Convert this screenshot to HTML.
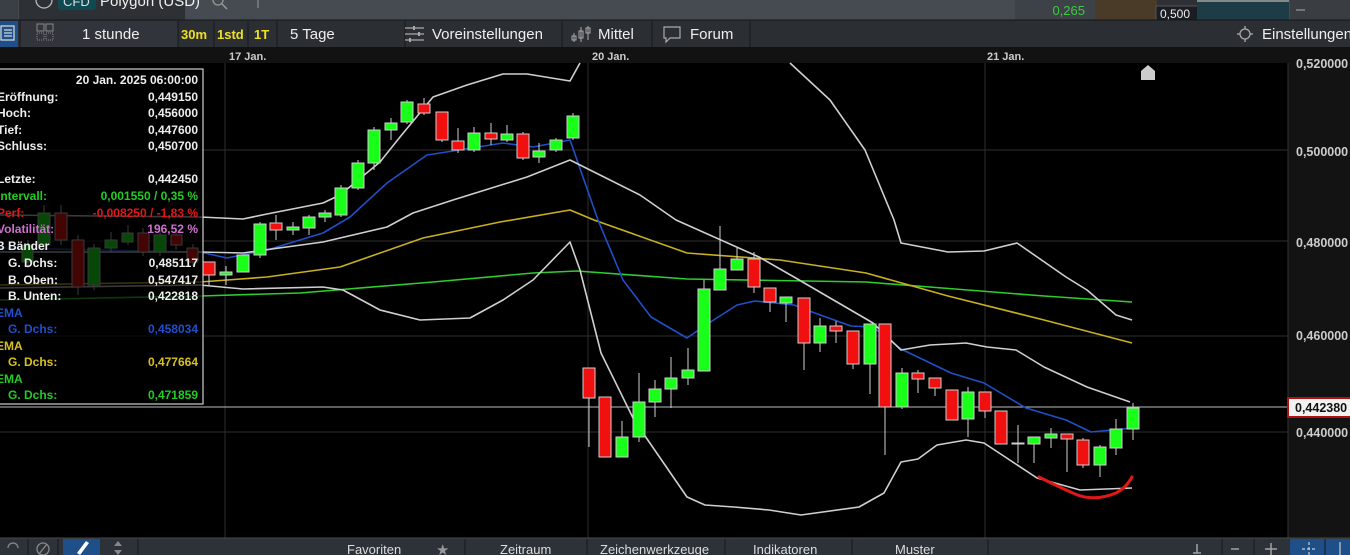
<!DOCTYPE html>
<html><head><meta charset="utf-8"><style>
body{margin:0;width:1350px;height:555px;overflow:hidden;background:#000;font-family:"Liberation Sans",sans-serif}
svg{display:block}
</style></head><body>
<svg width="1350" height="555" xmlns="http://www.w3.org/2000/svg" font-family="Liberation Sans, sans-serif">
<rect x="0" y="0" width="1350" height="20" fill="#464a51"/>
<rect x="0" y="0" width="18" height="20" fill="#3a3e45"/>
<rect x="19" y="0" width="166" height="20" fill="#2d3136"/>
<circle cx="44" cy="0" r="8" fill="none" stroke="#bbb" stroke-width="1.3"/>
<rect x="58" y="-4" width="38" height="14" rx="3" fill="#0f4a52"/>
<text x="63" y="6" font-size="13" fill="#ddd">CFD</text>
<text x="100" y="6" font-size="15" fill="#eee">Polygon (USD)</text>
<circle cx="218" cy="0" r="5" fill="none" stroke="#999" stroke-width="1.3"/>
<line x1="222" y1="4" x2="227" y2="9" stroke="#999" stroke-width="1.5"/>
<line x1="258" y1="0" x2="258" y2="8" stroke="#999"/>
<rect x="1015" y="0" width="80" height="20" fill="#3d4148"/>
<text x="1085" y="15" font-size="13" fill="#3dcc3d" text-anchor="end">0,265</text>
<rect x="1095" y="0" width="62" height="20" fill="#4a3b28"/>
<rect x="1157" y="0" width="40" height="20" fill="#2d3035"/>
<rect x="1156" y="6" width="42" height="14" fill="#1a1d22" stroke="#555"/>
<text x="1160" y="18" font-size="12" fill="#eee">0,500</text>
<rect x="1197" y="0" width="92" height="20" fill="#1d3c46"/>
<rect x="1197" y="0" width="92" height="2" fill="#888"/>
<rect x="1290" y="0" width="60" height="20" fill="#3a3d42"/>
<line x1="1296" y1="10" x2="1305" y2="10" stroke="#aaa"/>
<rect x="0" y="20" width="1350" height="27" fill="#2b2f34"/>
<line x1="0" y1="20" x2="1350" y2="20" stroke="#151719"/>
<rect x="0" y="21" width="18" height="26" fill="#1f4f88"/>
<g stroke="#ddd" stroke-width="1.2" fill="none"><rect x="1" y="26" width="13" height="14"/><line x1="4" y1="30" x2="12" y2="30"/><line x1="4" y1="33" x2="12" y2="33"/><line x1="4" y1="36" x2="12" y2="36"/></g>
<rect x="20" y="21" width="158" height="26" fill="#31353b"/>
<g stroke="#888" fill="none"><rect x="37" y="24" width="7" height="7"/><rect x="46" y="24" width="7" height="7"/><rect x="37" y="33" width="7" height="7" stroke-dasharray="1 1"/><rect x="46" y="33" width="7" height="7" stroke-dasharray="1 1"/></g>
<text x="82" y="39" font-size="15" fill="#eee">1 stunde</text>
<g stroke="#161819"><line x1="178" y1="21" x2="178" y2="47"/><line x1="214" y1="21" x2="214" y2="47"/><line x1="248" y1="21" x2="248" y2="47"/><line x1="277" y1="21" x2="277" y2="47"/><line x1="405" y1="21" x2="405" y2="47"/><line x1="562" y1="21" x2="562" y2="47"/><line x1="652" y1="21" x2="652" y2="47"/><line x1="750" y1="21" x2="750" y2="47"/><line x1="20" y1="21" x2="20" y2="47"/></g>
<text x="181" y="39" font-size="13" fill="#f0e020" font-weight="bold">30m</text>
<text x="217" y="39" font-size="13" fill="#f0e020" font-weight="bold">1std</text>
<text x="254" y="39" font-size="13" fill="#f0e020" font-weight="bold">1T</text>
<text x="290" y="39" font-size="15" fill="#eee">5 Tage</text>
<g stroke="#aaa" stroke-width="1.3"><line x1="405" y1="28" x2="424" y2="28"/><line x1="405" y1="34" x2="424" y2="34"/><line x1="405" y1="40" x2="424" y2="40"/><line x1="414" y1="26" x2="414" y2="30" stroke-width="2"/><line x1="419" y1="32" x2="419" y2="36" stroke-width="2"/><line x1="410" y1="38" x2="410" y2="42" stroke-width="2"/></g>
<text x="432" y="39" font-size="15" fill="#eee">Voreinstellungen</text>
<g stroke="#aaa" fill="none"><line x1="574" y1="33" x2="574" y2="42"/><rect x="572" y="36" width="4" height="4"/><line x1="581" y1="27" x2="581" y2="42"/><rect x="579" y="31" width="4" height="7"/><line x1="588" y1="26" x2="588" y2="40"/><rect x="586" y="28" width="4" height="5"/></g>
<text x="598" y="39" font-size="15" fill="#eee">Mittel</text>
<path d="M664 27h16v11h-10l-4 4v-4h-2z" fill="none" stroke="#aaa" stroke-width="1.2"/>
<text x="690" y="39" font-size="15" fill="#eee">Forum</text>
<g stroke="#aaa" fill="none" stroke-width="1.3"><circle cx="1245" cy="34" r="5"/><line x1="1245" y1="26" x2="1245" y2="29"/><line x1="1245" y1="39" x2="1245" y2="42"/><line x1="1237" y1="34" x2="1240" y2="34"/><line x1="1250" y1="34" x2="1253" y2="34"/></g>
<text x="1262" y="39" font-size="15" fill="#eee">Einstellungen</text>
<rect x="0" y="47" width="1350" height="16" fill="#121212"/>
<g font-size="11" font-weight="bold" fill="#ccc"><text x="229" y="60">17 Jan.</text><text x="592" y="60">20 Jan.</text><text x="987" y="60">21 Jan.</text></g>
<rect x="1288" y="63" width="62" height="475" fill="#131313"/>
<line x1="1288" y1="63" x2="1288" y2="538" stroke="#333"/>
<g font-size="12.5" font-weight="bold" fill="#ccc"><text x="1296" y="68">0,520000</text><text x="1296" y="156">0,500000</text><text x="1296" y="247">0,480000</text><text x="1296" y="340">0,460000</text><text x="1296" y="437">0,440000</text></g>
<g stroke="#2e2e2e"><line x1="0" y1="150" x2="1288" y2="150"/><line x1="0" y1="241" x2="1288" y2="241"/><line x1="0" y1="336" x2="1288" y2="336"/><line x1="0" y1="432" x2="1288" y2="432"/><line x1="225" y1="63" x2="225" y2="538"/><line x1="588" y1="63" x2="588" y2="538"/><line x1="985" y1="63" x2="985" y2="538"/></g>
<line x1="0" y1="407" x2="1288" y2="407" stroke="#bbb"/>
<rect x="1288" y="398" width="64" height="19" fill="#f2f2f2" stroke="#b01010" stroke-width="2"/>
<text x="1295" y="412" font-size="12.5" font-weight="bold" fill="#111">0,442380</text>
<path d="M1141 80v-9l7-6 7 6v9z" fill="#ccc"/>
<g fill="none" stroke-width="1.6" stroke-linejoin="round">
<polyline stroke="#2ecc2e" points="0,300 200,296 300,293 433,282 533,273 577,271 687,279 866,282 955,289 1044,296 1132,302"/>
<polyline stroke="#c8b020" points="0,285 200,282 267,277 340,267 423,238 500,222 570,210 594,220 687,253 780,260 866,273 948,296 1044,320 1132,343"/>
<polyline stroke="#1e50c8" points="0,248 200,252 227,258 267,250 323,233 350,217 387,183 427,155 453,151 503,143 533,147 570,140 598,220 623,280 651,317 687,338 709,323 737,305 755,301 794,305 812,312 851,326 873,327 901,349 951,373 984,383 1026,408 1066,420 1091,432 1132,428"/>
<g stroke="#cfcfcf">
<polyline points="0,215 200,217 243,219 267,214 323,203 340,195 380,162 400,137 433,97 467,85 503,74 527,74 570,81 580,63"/>
<polyline points="790,63 830,100 865,150 894,220 901,243 948,252 984,251 1017,243 1066,277 1087,290 1116,315 1132,320"/>
<polyline points="0,252 200,252 243,253 323,242 387,227 413,213 453,200 527,177 570,160 600,175 640,195 676,220 759,257 794,277 873,323 901,350 930,345 966,343 987,347 1016,350 1044,367 1087,387 1130,402"/>
<polyline points="0,288 200,285 243,289 323,287 343,290 380,310 420,320 470,318 503,300 533,280 570,242 580,270 601,353 634,420 687,497 705,505 734,507 769,510 801,515 859,507 884,493 901,462 918,459 937,445 966,440 984,443 1037,478 1080,490 1132,488"/>
</g>
</g>
<g stroke="#cfcfcf" stroke-width="1">
<line x1="28" y1="240" x2="28" y2="268"/><rect x="22" y="245" width="11" height="17" fill="#1aff1a"/>
<line x1="44" y1="205" x2="44" y2="250"/><rect x="38" y="213" width="12" height="32" fill="#1aff1a"/>
<line x1="61" y1="205" x2="61" y2="245"/><rect x="55" y="213" width="12" height="27" fill="#f01010"/>
<line x1="78" y1="235" x2="78" y2="295"/><rect x="72" y="240" width="12" height="47" fill="#f01010"/>
<line x1="94" y1="244" x2="94" y2="290"/><rect x="88" y="248" width="12" height="37" fill="#1aff1a"/>
<line x1="111" y1="232" x2="111" y2="252"/><rect x="105" y="240" width="12" height="8" fill="#1aff1a"/>
<line x1="128" y1="225" x2="128" y2="245"/><rect x="122" y="233" width="11" height="9" fill="#1aff1a"/>
<line x1="143" y1="228" x2="143" y2="256"/><rect x="138" y="233" width="11" height="19" fill="#f01010"/>
<line x1="160" y1="230" x2="160" y2="256"/><rect x="154" y="235" width="12" height="17" fill="#1aff1a"/>
<line x1="176" y1="230" x2="176" y2="250"/><rect x="171" y="235" width="11" height="10" fill="#f01010"/>
<line x1="193" y1="244" x2="193" y2="266"/><rect x="187" y="248" width="11" height="14" fill="#f01010"/>
<line x1="209" y1="262" x2="209" y2="285"/><rect x="203" y="262" width="12" height="13" fill="#f01010"/>
<line x1="226" y1="266" x2="226" y2="285"/><rect x="220" y="272" width="12" height="3" fill="#1aff1a"/>
<line x1="243" y1="255" x2="243" y2="272"/><rect x="237" y="255" width="12" height="17" fill="#1aff1a"/>
<line x1="260" y1="222" x2="260" y2="258"/><rect x="254" y="224" width="12" height="31" fill="#1aff1a"/>
<line x1="276" y1="215" x2="276" y2="240"/><rect x="270" y="223" width="12" height="7" fill="#f01010"/>
<line x1="293" y1="222" x2="293" y2="235"/><rect x="287" y="227" width="12" height="3" fill="#1aff1a"/>
<line x1="309" y1="215" x2="309" y2="235"/><rect x="303" y="217" width="12" height="11" fill="#1aff1a"/>
<line x1="325" y1="210" x2="325" y2="222"/><rect x="319" y="213" width="12" height="4" fill="#1aff1a"/>
<line x1="341" y1="185" x2="341" y2="217"/><rect x="335" y="188" width="12" height="27" fill="#1aff1a"/>
<line x1="358" y1="160" x2="358" y2="190"/><rect x="352" y="163" width="12" height="25" fill="#1aff1a"/>
<line x1="374" y1="127" x2="374" y2="170"/><rect x="368" y="130" width="12" height="33" fill="#1aff1a"/>
<line x1="391" y1="118" x2="391" y2="140"/><rect x="385" y="123" width="12" height="7" fill="#1aff1a"/>
<line x1="407" y1="100" x2="407" y2="124"/><rect x="401" y="102" width="12" height="20" fill="#1aff1a"/>
<line x1="424" y1="98" x2="424" y2="115"/><rect x="418" y="104" width="12" height="9" fill="#f01010"/>
<line x1="442" y1="112" x2="442" y2="142"/><rect x="436" y="112" width="12" height="28" fill="#f01010"/>
<line x1="458" y1="128" x2="458" y2="153"/><rect x="452" y="141" width="12" height="9" fill="#f01010"/>
<line x1="474" y1="127" x2="474" y2="152"/><rect x="468" y="133" width="12" height="17" fill="#1aff1a"/>
<line x1="491" y1="123" x2="491" y2="145"/><rect x="485" y="133" width="12" height="6" fill="#f01010"/>
<line x1="507" y1="125" x2="507" y2="142"/><rect x="501" y="134" width="12" height="6" fill="#1aff1a"/>
<line x1="523" y1="132" x2="523" y2="160"/><rect x="517" y="134" width="12" height="24" fill="#f01010"/>
<line x1="539" y1="143" x2="539" y2="163"/><rect x="533" y="151" width="12" height="6" fill="#1aff1a"/>
<line x1="556" y1="138" x2="556" y2="152"/><rect x="550" y="140" width="12" height="10" fill="#1aff1a"/>
<line x1="573" y1="113" x2="573" y2="140"/><rect x="567" y="116" width="12" height="22" fill="#1aff1a"/>
<line x1="589" y1="368" x2="589" y2="447"/><rect x="583" y="368" width="12" height="30" fill="#f01010"/>
<rect x="599" y="397" width="12" height="60" fill="#f01010"/>
<line x1="622" y1="421" x2="622" y2="457"/><rect x="616" y="437" width="12" height="20" fill="#1aff1a"/>
<line x1="639" y1="373" x2="639" y2="442"/><rect x="633" y="402" width="12" height="35" fill="#1aff1a"/>
<line x1="655" y1="380" x2="655" y2="417"/><rect x="649" y="389" width="12" height="13" fill="#1aff1a"/>
<line x1="671" y1="357" x2="671" y2="408"/><rect x="665" y="378" width="12" height="11" fill="#1aff1a"/>
<line x1="688" y1="348" x2="688" y2="385"/><rect x="682" y="370" width="12" height="8" fill="#1aff1a"/>
<line x1="704" y1="280" x2="704" y2="371"/><rect x="698" y="289" width="12" height="82" fill="#1aff1a"/>
<line x1="720" y1="226" x2="720" y2="290"/><rect x="714" y="269" width="12" height="21" fill="#1aff1a"/>
<line x1="737" y1="248" x2="737" y2="270"/><rect x="731" y="259" width="12" height="11" fill="#1aff1a"/>
<line x1="754" y1="252" x2="754" y2="293"/><rect x="748" y="259" width="12" height="28" fill="#f01010"/>
<line x1="770" y1="288" x2="770" y2="312"/><rect x="764" y="288" width="12" height="14" fill="#f01010"/>
<line x1="786" y1="297" x2="786" y2="322"/><rect x="780" y="297" width="12" height="6" fill="#1aff1a"/>
<line x1="804" y1="298" x2="804" y2="370"/><rect x="798" y="298" width="12" height="45" fill="#f01010"/>
<line x1="820" y1="318" x2="820" y2="352"/><rect x="814" y="326" width="12" height="17" fill="#1aff1a"/>
<line x1="836" y1="321" x2="836" y2="343"/><rect x="830" y="326" width="12" height="5" fill="#f01010"/>
<line x1="853" y1="331" x2="853" y2="369"/><rect x="847" y="331" width="12" height="33" fill="#f01010"/>
<line x1="870" y1="324" x2="870" y2="394"/><rect x="864" y="324" width="12" height="40" fill="#1aff1a"/>
<line x1="885" y1="324" x2="885" y2="455"/><rect x="879" y="324" width="12" height="83" fill="#f01010"/>
<line x1="902" y1="368" x2="902" y2="409"/><rect x="896" y="373" width="12" height="34" fill="#1aff1a"/>
<line x1="918" y1="370" x2="918" y2="393"/><rect x="912" y="373" width="12" height="6" fill="#f01010"/>
<line x1="935" y1="378" x2="935" y2="396"/><rect x="929" y="378" width="12" height="10" fill="#f01010"/>
<line x1="952" y1="390" x2="952" y2="420"/><rect x="946" y="390" width="12" height="30" fill="#f01010"/>
<line x1="968" y1="387" x2="968" y2="437"/><rect x="962" y="392" width="12" height="27" fill="#1aff1a"/>
<line x1="985" y1="392" x2="985" y2="418"/><rect x="979" y="392" width="12" height="19" fill="#f01010"/>
<line x1="1001" y1="411" x2="1001" y2="444"/><rect x="995" y="411" width="12" height="33" fill="#f01010"/>
<line x1="1018" y1="425" x2="1018" y2="463"/><rect x="1012" y="443" width="12" height="1" fill="#f01010"/>
<line x1="1034" y1="437" x2="1034" y2="463"/><rect x="1028" y="437" width="12" height="7" fill="#1aff1a"/>
<line x1="1051" y1="428" x2="1051" y2="448"/><rect x="1045" y="434" width="12" height="4" fill="#1aff1a"/>
<line x1="1067" y1="434" x2="1067" y2="472"/><rect x="1061" y="434" width="12" height="5" fill="#f01010"/>
<line x1="1083" y1="438" x2="1083" y2="468"/><rect x="1077" y="440" width="12" height="25" fill="#f01010"/>
<line x1="1100" y1="445" x2="1100" y2="477"/><rect x="1094" y="447" width="12" height="18" fill="#1aff1a"/>
<line x1="1116" y1="419" x2="1116" y2="455"/><rect x="1110" y="429" width="12" height="19" fill="#1aff1a"/>
<line x1="1133" y1="403" x2="1133" y2="440"/><rect x="1127" y="408" width="12" height="21" fill="#1aff1a"/>
</g>
<path d="M1039 477 Q1059 487 1075 494 Q1094 502 1116 493 Q1126 488 1132 477" fill="none" stroke="#e01818" stroke-width="3" stroke-linecap="round"/>
<rect x="-2" y="69" width="205" height="335" fill="rgba(0,0,0,0.72)" stroke="#cfcfcf" stroke-width="1.2"/>
<g font-size="12" font-weight="bold">
<text x="198" y="84" fill="#eee" text-anchor="end">20 Jan. 2025 06:00:00</text>
<g fill="#eee"><text x="-3" y="101">Eröffnung:</text><text x="-3" y="117">Hoch:</text><text x="-3" y="134">Tief:</text><text x="-3" y="150">Schluss:</text><text x="-3" y="183">Letzte:</text><text x="-4" y="250">B Bänder</text><text x="8" y="267">G. Dchs:</text><text x="8" y="284">B. Oben:</text><text x="8" y="300">B. Unten:</text></g>
<g fill="#eee" text-anchor="end"><text x="198" y="101">0,449150</text><text x="198" y="117">0,456000</text><text x="198" y="134">0,447600</text><text x="198" y="150">0,450700</text><text x="198" y="183">0,442450</text><text x="198" y="267">0,485117</text><text x="198" y="284">0,547417</text><text x="198" y="300">0,422818</text></g>
<text x="-3" y="200" fill="#22cc22">Intervall:</text><text x="198" y="200" fill="#22cc22" text-anchor="end">0,001550 / 0,35 %</text>
<text x="-3" y="217" fill="#e01818">Perf:</text><text x="198" y="217" fill="#e01818" text-anchor="end">-0,008250 / -1,83 %</text>
<text x="-3" y="233" fill="#d070d0">Volatilität:</text><text x="198" y="233" fill="#d070d0" text-anchor="end">196,52 %</text>
<text x="-4" y="317" fill="#2050d0">EMA</text><text x="8" y="333" fill="#2050d0">G. Dchs:</text><text x="198" y="333" fill="#2050d0" text-anchor="end">0,458034</text>
<text x="-4" y="350" fill="#d8c020">EMA</text><text x="8" y="366" fill="#d8c020">G. Dchs:</text><text x="198" y="366" fill="#d8c020" text-anchor="end">0,477664</text>
<text x="-4" y="383" fill="#22cc22">EMA</text><text x="8" y="399" fill="#22cc22">G. Dchs:</text><text x="198" y="399" fill="#22cc22" text-anchor="end">0,471859</text>
</g>
<rect x="0" y="538" width="1350" height="17" fill="#2d3239"/>
<line x1="0" y1="538" x2="1350" y2="538" stroke="#45494f"/>
<rect x="63" y="539" width="37" height="16" fill="#1f4f88"/>
<rect x="1290" y="539" width="60" height="16" fill="#1f4f88"/>
<g stroke="#171a1e"><line x1="28" y1="539" x2="28" y2="555"/><line x1="58" y1="539" x2="58" y2="555"/><line x1="138" y1="539" x2="138" y2="555"/><line x1="465" y1="539" x2="465" y2="555"/><line x1="587" y1="539" x2="587" y2="555"/><line x1="725" y1="539" x2="725" y2="555"/><line x1="852" y1="539" x2="852" y2="555"/><line x1="988" y1="539" x2="988" y2="555"/><line x1="1222" y1="539" x2="1222" y2="555"/><line x1="1254" y1="539" x2="1254" y2="555"/><line x1="1325" y1="539" x2="1325" y2="555"/></g>
<circle cx="43" cy="549" r="6" fill="none" stroke="#888" stroke-width="1.3"/><line x1="39" y1="554" x2="47" y2="544" stroke="#888" stroke-width="1.3"/>
<path d="M8 548a5 5 0 0 1 10 0" fill="none" stroke="#888" stroke-width="1.3"/>
<path d="M77 553l9-12 3 2-9 12z" fill="#fff"/>
<path d="M118 541l-4 5h8z" fill="#888"/><path d="M118 555l-4-5h8z" fill="#888"/>
<g font-size="13" fill="#ddd"><text x="347" y="554">Favoriten</text><text x="500" y="554">Zeitraum</text><text x="600" y="554">Zeichenwerkzeuge</text><text x="753" y="554">Indikatoren</text><text x="895" y="554">Muster</text></g>
<text x="436" y="555" font-size="15" fill="#999">★</text>
<g stroke="#aaa" stroke-width="1.4"><line x1="1231" y1="549" x2="1239" y2="549"/><line x1="1265" y1="549" x2="1277" y2="549"/><line x1="1271" y1="543" x2="1271" y2="555"/><line x1="1197" y1="544" x2="1197" y2="553"/><line x1="1193" y1="553" x2="1201" y2="553"/></g>
<g stroke="#ccc" stroke-width="1.2"><line x1="1302" y1="549" x2="1316" y2="549" stroke-dasharray="3 2"/><line x1="1309" y1="542" x2="1309" y2="555" stroke-dasharray="3 2"/><line x1="1340" y1="542" x2="1340" y2="555"/></g>
</svg>
</body></html>
